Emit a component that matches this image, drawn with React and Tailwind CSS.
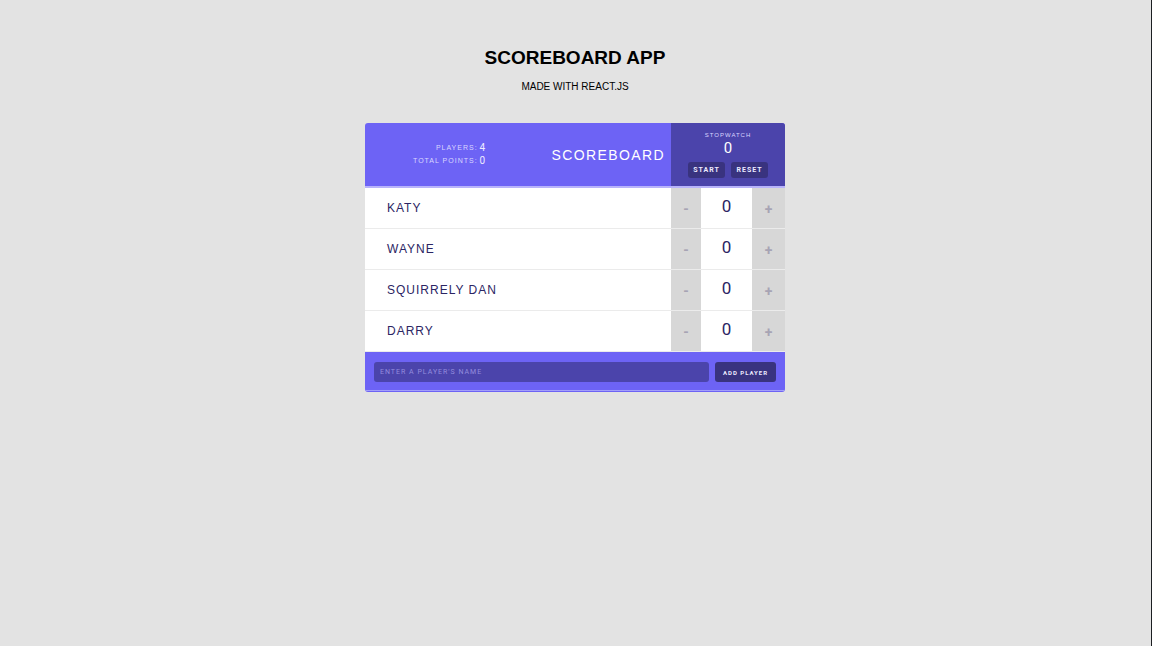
import { useEffect, useState } from "react";

const initialPlayers = [
  { id: 1, name: "KATY", score: 0 },
  { id: 2, name: "WAYNE", score: 0 },
  { id: 3, name: "SQUIRRELY DAN", score: 0 },
  { id: 4, name: "DARRY", score: 0 },
];

function Stats({ players }) {
  const total = players.reduce((sum, p) => sum + p.score, 0);
  return (
    <table className="mb-0.5 ml-12 text-[7px] leading-[13px] tracking-[1px] text-[#d9d6ff]">
      <tbody>
        <tr>
          <th scope="row" className="p-0 text-right font-normal">PLAYERS:</th>
          <td className="pl-0.5 font-[Roboto,sans-serif] text-[10px] tracking-normal text-[#edebff]">{players.length}</td>
        </tr>
        <tr>
          <th scope="row" className="p-0 text-right font-normal">TOTAL POINTS:</th>
          <td className="pl-0.5 font-[Roboto,sans-serif] text-[10px] tracking-normal text-[#edebff]">{total}</td>
        </tr>
      </tbody>
    </table>
  );
}

function Stopwatch() {
  const [running, setRunning] = useState(false);
  const [seconds, setSeconds] = useState(0);
  useEffect(() => {
    if (!running) return undefined;
    const timer = setInterval(() => setSeconds((s) => s + 1), 1000);
    return () => clearInterval(timer);
  }, [running]);
  const button =
    "h-4 rounded-[3px] bg-[#39337f] font-[Roboto,sans-serif] text-[7px] leading-4 font-bold tracking-[1px] text-[#edebff] w-[37px]";
  return (
    <section className="flex w-[114px] flex-col items-center bg-[#4b44ab] pt-2">
      <h2 className="text-[6px] leading-2 tracking-[1px] text-[#d9d6ff]">STOPWATCH</h2>
      <span className="font-[Roboto,sans-serif] text-[15px] leading-[18px] text-white">{seconds}</span>
      <div className="mt-[5px] flex gap-1.5">
        <button type="button" className={button} onClick={() => setRunning(!running)}>
          {running ? "STOP" : "START"}
        </button>
        <button type="button" className={button} onClick={() => setSeconds(0)}>RESET</button>
      </div>
    </section>
  );
}

function Player({ player, onChange }) {
  const button = "bg-[#d7d7d7] pt-0.5 font-[Roboto,sans-serif] text-sm leading-5 font-bold text-[#a7a4b4]";
  return (
    <li className="flex h-[41px] border-b border-[#ebebeb] bg-white text-[#2b2563]">
      <span className="flex flex-1 items-center pl-[22px] text-xs tracking-[1px]">{player.name}</span>
      <button type="button" aria-label={`Decrease ${player.name}`} className={`w-[30px] ${button}`} onClick={() => onChange(-1)}>-</button>
      <span className="flex w-[51px] items-center justify-center pb-0.5 font-[Roboto,sans-serif] text-[17px]">{player.score}</span>
      <button type="button" aria-label={`Increase ${player.name}`} className={`w-[33px] ${button}`} onClick={() => onChange(1)}>+</button>
    </li>
  );
}

function AddPlayer({ onAdd }) {
  const [name, setName] = useState("");
  const submit = (event) => {
    event.preventDefault();
    if (!name.trim()) return;
    onAdd(name.trim().toUpperCase());
    setName("");
  };
  return (
    <form onSubmit={submit} className="flex gap-1.5 border-b border-[#a39efa] px-[9px] pt-[10px] pb-2">
      <input
        type="text"
        aria-label="Player name"
        placeholder="ENTER A PLAYER'S NAME"
        value={name}
        onChange={(event) => setName(event.target.value)}
        className="h-5 min-w-0 flex-1 rounded-[3px] bg-[#4b44ab] px-1.5 font-[Roboto,sans-serif] text-[7px] tracking-[1px] text-white placeholder:text-[#938dde]"
      />
      <button type="submit" className="h-5 w-[61px] rounded-[3px] bg-[#39337f] font-[Roboto,sans-serif] text-[6px] font-bold tracking-[1px] text-[#edebff]">
        ADD PLAYER
      </button>
    </form>
  );
}

export default function App() {
  const [players, setPlayers] = useState(initialPlayers);
  const changeScore = (id, delta) =>
    setPlayers(players.map((p) => (p.id === id ? { ...p, score: p.score + delta } : p)));
  const addPlayer = (name) => setPlayers([...players, { id: Date.now(), name, score: 0 }]);

  return (
    <div className="min-h-screen border-r border-[#1c1f22] bg-[#e3e3e3] pt-[45px] pr-[17px] pl-4 font-['Liberation_Sans',Arial,sans-serif]">
      <header className="text-center text-black">
        <h1 className="text-[19px] leading-[26px] font-bold">SCOREBOARD APP</h1>
        <p className="mt-2 text-[10px] leading-4">MADE WITH REACT.JS</p>
      </header>
      <main className="mx-auto mt-7 max-w-[420px] overflow-hidden rounded-[3px] bg-[#6d63f5] pb-px">
        <div className="flex h-[65px] border-b-2 border-[#b8b3fb]">
          <div className="flex flex-1 items-center justify-between pr-1.5">
            <Stats players={players} />
            <h2 className="text-sm tracking-widest text-white">SCOREBOARD</h2>
          </div>
          <Stopwatch />
        </div>
        <ul>
          {players.map((player) => (
            <Player key={player.id} player={player} onChange={(delta) => changeScore(player.id, delta)} />
          ))}
        </ul>
        <AddPlayer onAdd={addPlayer} />
      </main>
    </div>
  );
}
